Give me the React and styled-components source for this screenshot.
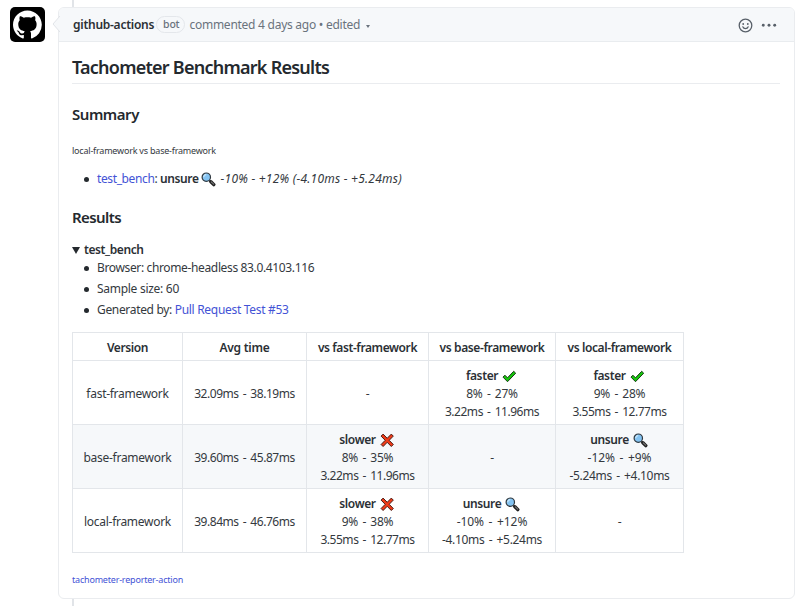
import React from 'react';
import styled, { createGlobalStyle, css } from 'styled-components';

const Global = createGlobalStyle`
  * { box-sizing: border-box; }
  body { margin: 0; background: #fff; overflow: hidden; }
`;

const Page = styled.main`
  width: 800px;
  height: 606px;
  display: flex;
  padding-left: 10px;
  overflow: hidden;
  background: #fff;
  color: #34393e;
  font: 400 12px/18px "Noto Sans", "Open Sans", sans-serif;
  white-space: nowrap;
`;

const Avatar = styled.svg`
  width: 35px;
  height: 35px;
  margin: 7px 13px 0 0;
  flex: none;
`;

const Thread = styled.div`
  width: 737px;
  flex: none;
  display: flex;
  flex-direction: column;
`;

const Rail = styled.div`
  width: 2px;
  height: ${(p) => p.$height}px;
  margin-left: 14px;
  background: #e1e4e8;
`;

const Card = styled.article`
  height: 592px;
  border: 1px solid #eaecef;
  border-radius: 6px;
`;

const Header = styled.header`
  position: relative;
  height: 34px;
  display: flex;
  align-items: center;
  padding: 0 17px 0 14px;
  background: #f6f8fa;
  border-bottom: 1px solid #e9ecef;
  border-radius: 5px 5px 0 0;
  color: #6a737d;
`;

const Pointer = styled.svg`
  position: absolute;
  left: -7px;
  top: 8px;
  width: 8px;
  height: 16px;
`;

const Text = styled.span`
  letter-spacing: ${(p) => p.$track ?? -0.3}px;
  ${(p) => p.$strong && css`font-weight: 600; color: #2b3035;`}
  ${(p) => p.$italic && css`font-style: italic;`}
`;

const Badge = styled.span`
  height: 17px;
  margin: 0 4px 0 2px;
  padding: 0 5px 0 6px;
  border: 1px solid #e4e7eb;
  border-radius: 9px;
  font-size: 10.5px;
  line-height: 15px;
  font-weight: 500;
  letter-spacing: -0.2px;
`;

const Caret = styled.span`
  margin: 3px 0 0 6px;
  border: 2.5px solid transparent;
  border-top: 3px solid #6a737d;
  border-bottom: 0;
`;

const Actions = styled.div`
  display: flex;
  align-items: center;
  gap: 8px;
  margin: 2px 0 0 auto;
  color: #586069;
`;

const Body = styled.div`
  padding: 0 14px 0 13px;
`;

const Title = styled.h2`
  height: 42px;
  margin: 0;
  border-bottom: 1px solid #eaecef;
  color: #24292e;
  font-size: 18px;
  line-height: 24px;
  font-weight: 600;
  letter-spacing: -0.75px;
  padding-top: 13px;
`;

const Heading = styled.h3`
  margin: ${(p) => p.$top}px 0 0;
  color: #24292e;
  font-size: 15px;
  line-height: 20px;
  font-weight: 600;
  letter-spacing: ${(p) => p.$track}px;
`;

const Small = styled.p`
  margin: ${(p) => p.$top}px 0 0;
  font-size: 9px;
  line-height: 14px;
  letter-spacing: ${(p) => p.$track}px;
`;

const List = styled.ul`
  display: flex;
  flex-direction: column;
  gap: 3px;
  margin: ${(p) => p.$top}px 0 0;
  padding: 0 0 0 12px;
  list-style: none;
`;

const Item = styled.li`
  display: flex;
  align-items: center;
  height: 18px;
  &::before {
    content: "";
    width: 5px;
    height: 5px;
    margin: 0 8px 0 0;
    border-radius: 50%;
    background: #24292e;
  }
`;

const Link = styled.a`
  color: #4353d6;
  text-decoration: none;
`;

const Toggle = styled.div`
  display: flex;
  align-items: center;
  gap: 4px;
  height: 18px;
  margin-top: 14px;
  &::before {
    content: "";
    border: 4.5px solid transparent;
    border-top: 7px solid #24292e;
    border-bottom: 0;
  }
`;

const Table = styled.table`
  width: 612px;
  margin-top: 13px;
  table-layout: fixed;
  border-collapse: collapse;
  text-align: center;
`;

const Row = styled.tr`
  height: ${(p) => (p.$head ? 28 : 64)}px;
  background: ${(p) => (p.$shaded ? '#f6f8fa' : '#fff')};
`;

const cell = css`
  padding: 2px 0 0;
  border: 1px solid #e3e6ea;
  vertical-align: middle;
`;

const Th = styled.th`
  ${cell}
  color: #2b3035;
  font-weight: 600;
  letter-spacing: ${(p) => p.$track}px;
`;

const Td = styled.td`
  ${cell}
  letter-spacing: ${(p) => p.$track ?? -0.28}px;
  word-spacing: ${(p) => p.$words ?? 0}px;
`;

const Line = styled.div`
  display: flex;
  justify-content: center;
  align-items: center;
  height: 18px;
  gap: 4px;
  letter-spacing: ${(p) => p.$track ?? -0.46}px;
  word-spacing: 1.5px;
`;

const Icon = styled.svg`
  width: 15px;
  height: 15px;
  flex: none;
  margin: ${(p) => p.$top ?? 1}px 1px 0 0;
`;

const Smile = () => (
  <svg width="15" height="15" viewBox="0 0 15 15" fill="none" stroke="currentColor">
    <circle cx="7.5" cy="7.5" r="6.3" strokeWidth="1.3" />
    <path d="M4.8 8.8c.5 1.3 1.5 1.8 2.7 1.8s2.2-.5 2.7-1.8" strokeWidth="1.2" strokeLinecap="round" />
    <circle cx="5.2" cy="6" r=".9" fill="currentColor" stroke="none" />
    <circle cx="9.8" cy="6" r=".9" fill="currentColor" stroke="none" />
  </svg>
);

const Dots = () => (
  <svg width="16" height="15" viewBox="0 0 16 15" fill="currentColor">
    <circle cx="2.3" cy="7.2" r="1.45" />
    <circle cx="8" cy="7.2" r="1.45" />
    <circle cx="13.7" cy="7.2" r="1.45" />
  </svg>
);

const Magnifier = () => (
  <Icon viewBox="0 0 15 15">
    <path d="M8.3 8.3l1.6 1.6" stroke="#202020" strokeWidth="1.8" />
    <path d="M9.9 9.7l2.9 2.9" stroke="#202020" strokeWidth="3.4" strokeLinecap="round" />
    <path d="M10.3 9.8l2.4 2.4" stroke="#777" strokeWidth="1.1" strokeLinecap="round" />
    <circle cx="5.3" cy="5.2" r="4.2" fill="#83c3f2" stroke="#30383e" strokeWidth="1.2" />
    <path d="M2.7 5.2c0-1.6 1-2.6 2.5-2.6" fill="none" stroke="#c9e8fc" strokeWidth="1.2" />
  </Icon>
);

const Check = () => (
  <Icon viewBox="0 0 15 15">
    <path d="M1 8.1l1.9-1.9 2.6 2.6 6.2-6.5 2 1.9-8.2 8.5z" fill="#16c60c" stroke="#173b15" strokeWidth="1" strokeLinejoin="round" />
  </Icon>
);

const Cross = () => (
  <Icon viewBox="0 0 15 15">
    <path d="M1.1 3.1l2-2 4.1 4.2 4.1-4.2 2 2-4.1 4.2 4.1 4.2-2 2-4.1-4.2-4.1 4.2-2-2 4.1-4.2z" fill="#f03a17" stroke="#4a1c15" strokeWidth="1" strokeLinejoin="round" />
  </Icon>
);

const verdictIcons = { faster: Check, slower: Cross, unsure: Magnifier };

const columns = [
  ['Version', 110, -0.4],
  ['Avg time', 124, -0.26],
  ['vs fast-framework', 122, -0.41],
  ['vs base-framework', 127, -0.37],
  ['vs local-framework', 128, -0.4],
];

const results = [
  ['fast-framework', '32.09ms - 38.19ms', null,
    ['faster', '8% - 27%', '3.22ms - 11.96ms'], ['faster', '9% - 28%', '3.55ms - 12.77ms']],
  ['base-framework', '39.60ms - 45.87ms',
    ['slower', '8% - 35%', '3.22ms - 11.96ms'], null, ['unsure', '-12% - +9%', '-5.24ms - +4.10ms']],
  ['local-framework', '39.84ms - 46.76ms',
    ['slower', '9% - 38%', '3.55ms - 12.77ms'], ['unsure', '-10% - +12%', '-4.10ms - +5.24ms'], null],
];

function Comparison({ value }) {
  if (!value) return <Td>-</Td>;
  const [verdict, percent, time] = value;
  const VerdictIcon = verdictIcons[verdict];
  const signed = verdict === 'unsure';
  return (
    <Td>
      <Line><Text $strong $track={-0.38}>{verdict}</Text><VerdictIcon /></Line>
      <Line $track={signed ? -0.05 : -0.25}>{percent}</Line>
      <Line $track={signed ? -0.32 : -0.46}>{time}</Line>
    </Td>
  );
}

export default function App() {
  return (
    <>
      <Global />
      <Page>
        <Avatar viewBox="0 0 35 35">
          <rect width="35" height="35" rx="5" fill="#000" />
          <g transform="translate(3 3.4) scale(1.8)">
            <path fill="#fff" d="M8 0C3.58 0 0 3.58 0 8c0 3.54 2.29 6.53 5.47 7.59.4.07.55-.17.55-.38 0-.19-.01-.82-.01-1.49-2.01.37-2.53-.49-2.69-.94-.09-.23-.48-.94-.82-1.13-.28-.15-.68-.52-.01-.53.63-.01 1.08.58 1.23.82.72 1.21 1.87.87 2.33.66.07-.52.28-.87.51-1.07-1.78-.2-3.64-.89-3.64-3.95 0-.87.31-1.59.82-2.15-.08-.2-.36-1.02.08-2.12 0 0 .67-.21 2.2.82.64-.18 1.32-.27 2-.27s1.36.09 2 .27c1.53-1.04 2.2-.82 2.2-.82.44 1.1.16 1.92.08 2.12.51.56.82 1.27.82 2.15 0 3.07-1.87 3.75-3.65 3.95.29.25.54.73.54 1.48 0 1.07-.01 1.93-.01 2.2 0 .21.15.46.55.38A8.01 8.01 0 0 0 16 8c0-4.42-3.58-8-8-8z" />
          </g>
        </Avatar>
        <Thread>
          <Rail $height={7} />
          <Card>
            <Header>
              <Pointer viewBox="0 0 8 16">
                <path d="M8 0L1 8l7 8" fill="#f6f8fa" stroke="#e1e4e8" />
              </Pointer>
              <Text $strong $track={-0.26}>github-actions</Text>
              <Badge>bot</Badge>
              <Text $track={-0.26}>commented 4 days ago&nbsp;•&nbsp;edited</Text>
              <Caret />
              <Actions><Smile /><Dots /></Actions>
            </Header>
            <Body>
              <Title>Tachometer Benchmark Results</Title>
              <Heading $top={20} $track={-0.46}>Summary</Heading>
              <Small $top={20} $track={-0.21}>local-framework vs base-framework</Small>
              <List $top={12}>
                <Item>
                  <Text $track={-0.38}><Link href="#bench">test_bench</Link>:&nbsp;</Text>
                  <Text $strong $track={-0.4}>unsure&nbsp;</Text>
                  <Magnifier />
                  <Text $italic $track={0.23}>&nbsp;-10% - +12% (-4.10ms - +5.24ms)</Text>
                </Item>
              </List>
              <Heading $top={19} $track={-0.58}>Results</Heading>
              <Toggle><Text $strong $track={-0.4}>test_bench</Text></Toggle>
              <List $top={0}>
                <Item><Text $track={-0.36}>Browser: chrome-headless 83.0.4103.116</Text></Item>
                <Item><Text $track={-0.28}>Sample size: 60</Text></Item>
                <Item><Text $track={-0.33}>Generated by:&nbsp;</Text><Link href="#run"><Text>Pull Request Test #53</Text></Link></Item>
              </List>
              <Table>
                <colgroup>{columns.map(([label, width]) => <col key={label} width={width} />)}</colgroup>
                <thead>
                  <Row $head>{columns.map(([label, , track]) => <Th key={label} $track={track}>{label}</Th>)}</Row>
                </thead>
                <tbody>
                  {results.map(([name, time, ...comparisons], i) => (
                    <Row key={name} $shaded={i % 2 === 1}>
                      <Td>{name}</Td>
                      <Td $track={-0.46} $words={1.5}>{time}</Td>
                      {comparisons.map((value, n) => <Comparison key={n} value={value} />)}
                    </Row>
                  ))}
                </tbody>
              </Table>
              <Small $top={20} $track={-0.2}><Link href="#action">tachometer-reporter-action</Link></Small>
            </Body>
          </Card>
          <Rail $height={7} />
        </Thread>
      </Page>
    </>
  );
}
